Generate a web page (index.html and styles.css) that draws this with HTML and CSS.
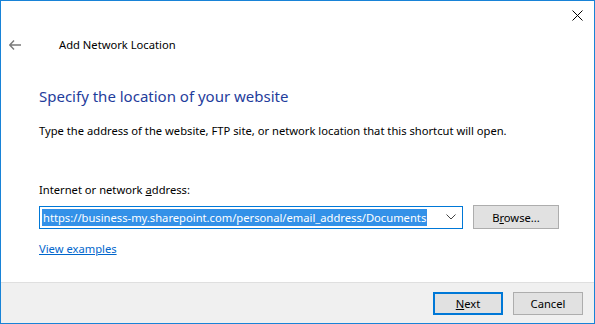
FILE: index.html
```html
<!DOCTYPE html>
<html lang="en">
<head>
    <meta charset="UTF-8">
    <title>Add Network Location</title>
    <link rel="stylesheet" href="styles.css">
</head>
<body>
    <div class="window">
        <div class="titlebar">
            <span class="close">
                <svg width="11" height="11" viewBox="0 0 11 11"><path d="M0.5 0.5 L10.5 10.5 M10.5 0.5 L0.5 10.5" stroke="#000" stroke-width="1" fill="none"/></svg>
            </span>
        </div>
        <div class="header">
            <span class="back">
                <svg width="12" height="10" viewBox="0 0 12 10"><path d="M5 0.5 L0.8 5 L5 9.5 M0.8 5 H12" stroke="#7a7a7a" stroke-width="1.4" fill="none"/></svg>
            </span>
            <span class="title">Add Network Location</span>
        </div>
        <div class="content">
            <h1 class="main">Specify the location of your website</h1>
            <p class="text">Type the address of the website, FTP site, or network location that this shortcut will open.</p>
            <p class="label">Internet or network <u>a</u>ddress:</p>
            <div class="row">
                <div class="combo">
                    <span class="value">https://business-my.sharepoint.com/personal/email_address/Documents</span>
                    <svg class="chevron" width="10" height="6" viewBox="0 0 10 6"><path d="M0.5 0.5 L5 5 L9.5 0.5" stroke="#444" stroke-width="1" fill="none"/></svg>
                </div>
                <button class="btn browse">B<u>r</u>owse...</button>
            </div>
            <a class="link" href="#">View examples</a>
        </div>
        <div class="footer">
            <button class="btn default"><u>N</u>ext</button>
            <button class="btn">Cancel</button>
        </div>
    </div>
</body>
</html>
```

FILE: styles.css
```css
*{
    margin: 0;
    padding: 0;
    box-sizing: border-box;
}
body{
    font-family: "Noto Sans", "Open Sans", sans-serif;
    font-size: 11.2px;
    color: #000;
    background: #fff;
}
.window{
    width: 595px;
    height: 324px;
    border: 1px solid #1883d7;
    display: flex;
    flex-direction: column;
    background: #fff;
}
.titlebar{
    height: 29px;
    display: flex;
    justify-content: flex-end;
    align-items: center;
    padding-right: 11px;
}
.close{
    display: flex;
}
.header{
    height: 30px;
    display: flex;
    align-items: center;
    padding-left: 8px;
}
.back{
    display: flex;
    width: 50px;
}
.title{
    line-height: 16px;
}
.content{
    flex: 1;
    padding-left: 38px;
    display: flex;
    flex-direction: column;
    align-items: flex-start;
}
.main{
    margin-top: 25px;
    font-size: 15px;
    font-weight: normal;
    line-height: 22px;
    color: #1f3d9c;
}
.text{
    margin-top: 16px;
    line-height: 16px;
}
.label{
    margin-top: 43px;
    line-height: 16px;
}
.label u, .btn u{
    text-decoration-thickness: 1px;
}
.row{
    margin-top: 7px;
    display: flex;
    align-items: center;
    gap: 10px;
}
.combo{
    width: 424px;
    height: 23px;
    border: 1px solid #0078d7;
    display: flex;
    align-items: center;
    padding: 0 6px 0 2px;
    justify-content: space-between;
}
.value{
    background: #3391e8;
    color: #fff;
    line-height: 17px;
    padding: 0 1px;
    white-space: nowrap;
}
.btn{
    font-family: inherit;
    font-size: 11.2px;
    color: #000;
    background: #e1e1e1;
    border: 1px solid #adadad;
    width: 70px;
    height: 23px;
}
.browse{
    width: 86px;
    height: 24px;
}
.link{
    margin-top: 12px;
    color: #0066cc;
    line-height: 16px;
}
.footer{
    height: 41px;
    background: #f0f0f0;
    border-top: 1px solid #dfdfdf;
    display: flex;
    justify-content: flex-end;
    align-items: center;
    gap: 10px;
    padding: 0 11px 0 0;
}
.footer .btn{
    height: 23px;
}
.btn.default{
    border: 2px solid #0078d7;
}
```
